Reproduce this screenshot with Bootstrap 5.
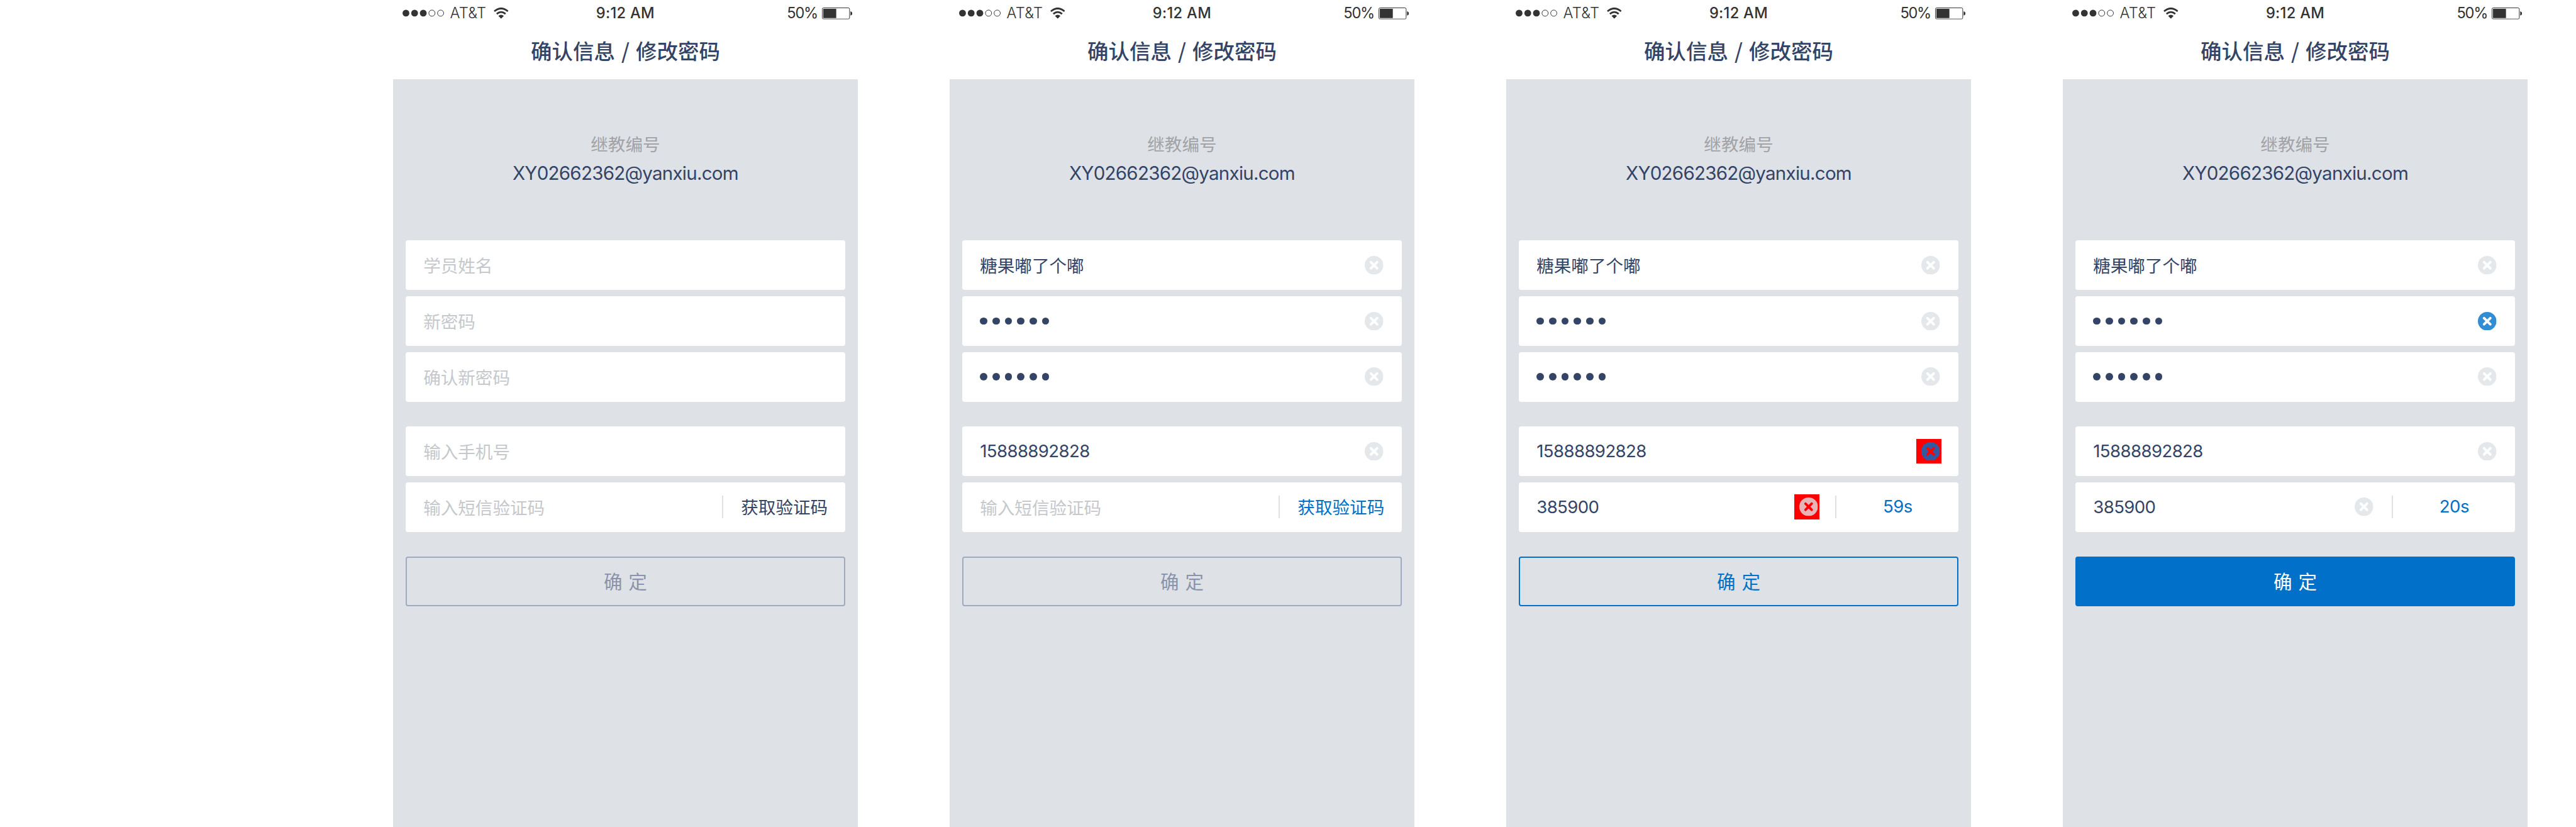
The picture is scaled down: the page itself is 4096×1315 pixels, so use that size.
<!DOCTYPE html>
<html lang="zh-CN">
<head>
<meta charset="utf-8">
<meta name="viewport" content="width=device-width, initial-scale=1">
<title>确认信息 / 修改密码</title>
<link href="https://cdn.jsdelivr.net/npm/bootstrap@5.3.0/dist/css/bootstrap.min.css" rel="stylesheet">
<style>
:root{--ink:#334466;--blue:#0070c9;--panel:#dee2e6}
html,body{overflow:hidden;background:#fff}
body{font-family:"Noto Sans CJK SC",sans-serif;color:var(--ink)}
.board{zoom:.98557;width:4156px;height:1334px;padding-left:634px;gap:148px}
.screen{width:750px;height:1334px;flex:none}
.statusbar{height:43px;padding:0 9px 0 15px;color:#333;font-family:Inter,sans-serif;font-size:24px;line-height:43px}
.statusbar>div{width:300px}
.statusbar svg{display:block;flex:none}
.carrier{font-weight:300;margin-left:10px;letter-spacing:.3px}
.wifi{margin-left:12px}
.clock{font-weight:500;letter-spacing:.3px;width:120px;margin:0 auto 0 0;text-align:center}
.percent{letter-spacing:-1.3px;margin-right:7px}
.titlebar{height:85px;font-size:34px;font-weight:500;line-height:77px;word-spacing:2.5px}
.sheet{background:var(--panel);padding:82px 20px 0}
.caption-line{font-size:28px;line-height:44px;color:#a2a3a6}
.account{font-family:Inter,sans-serif;font-size:30px;line-height:51px;letter-spacing:-.77px;height:134px}
.field{height:80px;background:#fff;border-radius:4px;padding:0 30px 0 29px;font-size:28px;line-height:80px}
.field.with-code{padding-right:0}
.hint{color:#c5c8cc}
.digits{font-family:Inter,sans-serif;letter-spacing:-.6px}
.pw i{width:12px;height:12px;border-radius:50%;background:var(--ink)}
.pw{gap:8px}
.fields{gap:10px}
.clear{width:30px;height:30px;flex:none;color:#fff;fill:var(--panel)}
.clear.on{fill:var(--blue)}
.hit{width:40px;height:40px;background:#f00;flex:none;padding-right:2px}
.hit .clear{color:#f00}
.hit.end{margin-right:-2px}
.code{width:199px;height:36px;line-height:36px;border-left:2.04px solid var(--panel);margin-left:30px;flex:none}
.hit + .code{margin-left:26px}
.code.live{color:var(--blue)}
.submit{--bs-btn-border-radius:4px;--bs-btn-border-width:2.04px;--bs-btn-padding-y:0;height:80px;font-size:30px;line-height:74px;word-spacing:3.3px;margin-top:40px;
--bs-btn-color:#8a93aa;--bs-btn-border-color:#a0aabf}
.submit.ready{--bs-btn-color:var(--blue);--bs-btn-border-color:var(--blue)}
.submit.full{--bs-btn-color:#fff;--bs-btn-bg:var(--blue);--bs-btn-border-color:var(--blue)}
</style>
<script src="https://cdn.jsdelivr.net/npm/bootstrap@5.3.0/dist/js/bootstrap.bundle.min.js"></script>
</head>
<body>
<svg width="0" height="0" class="position-absolute">
  <symbol id="signal" viewBox="0 0 67 12"><g fill="#333"><circle cx="5.5" cy="6" r="5.5"/><circle cx="19.5" cy="6" r="5.5"/><circle cx="33.5" cy="6" r="5.5"/></g><g fill="none" stroke="#333"><circle cx="47.5" cy="6" r="5"/><circle cx="61.5" cy="6" r="5"/></g></symbol>
  <symbol id="wifi" viewBox="0 0 24 18"><g fill="none" stroke="#333"><path stroke-width="2.9" d="M1 6.1Q12-3.2 23 6.1"/><path stroke-width="2.8" d="M4.9 10.3Q12 4.1 19.1 10.3"/></g><path fill="#333" d="M7.6 13.4Q12 9.7 16.4 13.4L12 18Z"/></symbol>
  <symbol id="battery" viewBox="0 0 49 19"><rect x=".5" y=".5" width="44" height="18" rx="2" fill="none" stroke="#333"/><rect x="2" y="2" width="21" height="15" fill="#333"/><path fill="#333" d="M46 6Q49 7 49 9.5T46 13Z"/></symbol>
  <symbol id="clear" viewBox="0 0 30 30"><circle cx="15" cy="15" r="15" opacity=".8"/><path d="M10 10L20 20M20 10L10 20" fill="none" stroke="currentColor" stroke-width="4" stroke-linecap="round"/></symbol>
</svg>
<main class="board d-flex">

  <section class="screen d-flex flex-column">
    <div class="statusbar d-flex align-items-center">
      <div class="d-flex align-items-center"><svg width="67" height="12"><use href="#signal"/></svg><span class="carrier">AT&amp;T</span><svg class="wifi" width="24" height="18"><use href="#wifi"/></svg></div>
      <span class="clock">9:12 AM</span>
      <div class="d-flex align-items-center justify-content-end"><span class="percent">50%</span><svg width="49" height="19"><use href="#battery"/></svg></div>
    </div>
    <header class="titlebar text-center">确认信息 / 修改密码</header>
    <div class="sheet flex-grow-1">
      <div class="caption-line text-center">继教编号</div>
      <div class="account text-center">XY02662362@yanxiu.com</div>
      <div class="fields d-flex flex-column">
        <div class="field hint">学员姓名</div>
        <div class="field hint">新密码</div>
        <div class="field hint">确认新密码</div>
      </div>
      <div class="fields d-flex flex-column" style="margin-top:40px">
        <div class="field hint">输入手机号</div>
        <div class="field with-code d-flex align-items-center justify-content-between"><span class="hint">输入短信验证码</span><span class="code text-center">获取验证码</span></div>
      </div>
      <button class="btn submit w-100">确 定</button>
    </div>
  </section>

  <section class="screen d-flex flex-column">
    <div class="statusbar d-flex align-items-center">
      <div class="d-flex align-items-center"><svg width="67" height="12"><use href="#signal"/></svg><span class="carrier">AT&amp;T</span><svg class="wifi" width="24" height="18"><use href="#wifi"/></svg></div>
      <span class="clock">9:12 AM</span>
      <div class="d-flex align-items-center justify-content-end"><span class="percent">50%</span><svg width="49" height="19"><use href="#battery"/></svg></div>
    </div>
    <header class="titlebar text-center">确认信息 / 修改密码</header>
    <div class="sheet flex-grow-1">
      <div class="caption-line text-center">继教编号</div>
      <div class="account text-center">XY02662362@yanxiu.com</div>
      <div class="fields d-flex flex-column">
        <div class="field d-flex align-items-center justify-content-between"><span>糖果嘟了个嘟</span><svg class="clear"><use href="#clear"/></svg></div>
        <div class="field d-flex align-items-center justify-content-between"><span class="pw d-flex"><i></i><i></i><i></i><i></i><i></i><i></i></span><svg class="clear"><use href="#clear"/></svg></div>
        <div class="field d-flex align-items-center justify-content-between"><span class="pw d-flex"><i></i><i></i><i></i><i></i><i></i><i></i></span><svg class="clear"><use href="#clear"/></svg></div>
      </div>
      <div class="fields d-flex flex-column" style="margin-top:40px">
        <div class="field d-flex align-items-center justify-content-between"><span class="digits">15888892828</span><svg class="clear"><use href="#clear"/></svg></div>
        <div class="field with-code d-flex align-items-center justify-content-between"><span class="hint">输入短信验证码</span><span class="code live text-center">获取验证码</span></div>
      </div>
      <button class="btn submit w-100">确 定</button>
    </div>
  </section>

  <section class="screen d-flex flex-column">
    <div class="statusbar d-flex align-items-center">
      <div class="d-flex align-items-center"><svg width="67" height="12"><use href="#signal"/></svg><span class="carrier">AT&amp;T</span><svg class="wifi" width="24" height="18"><use href="#wifi"/></svg></div>
      <span class="clock">9:12 AM</span>
      <div class="d-flex align-items-center justify-content-end"><span class="percent">50%</span><svg width="49" height="19"><use href="#battery"/></svg></div>
    </div>
    <header class="titlebar text-center">确认信息 / 修改密码</header>
    <div class="sheet flex-grow-1">
      <div class="caption-line text-center">继教编号</div>
      <div class="account text-center">XY02662362@yanxiu.com</div>
      <div class="fields d-flex flex-column">
        <div class="field d-flex align-items-center justify-content-between"><span>糖果嘟了个嘟</span><svg class="clear"><use href="#clear"/></svg></div>
        <div class="field d-flex align-items-center justify-content-between"><span class="pw d-flex"><i></i><i></i><i></i><i></i><i></i><i></i></span><svg class="clear"><use href="#clear"/></svg></div>
        <div class="field d-flex align-items-center justify-content-between"><span class="pw d-flex"><i></i><i></i><i></i><i></i><i></i><i></i></span><svg class="clear"><use href="#clear"/></svg></div>
      </div>
      <div class="fields d-flex flex-column" style="margin-top:40px">
        <div class="field d-flex align-items-center justify-content-between"><span class="digits">15888892828</span><span class="hit end d-flex align-items-center justify-content-end"><svg class="clear on"><use href="#clear"/></svg></span></div>
        <div class="field with-code d-flex align-items-center"><span class="digits me-auto">385900</span><span class="hit d-flex align-items-center justify-content-end"><svg class="clear"><use href="#clear"/></svg></span><span class="code live digits text-center">59s</span></div>
      </div>
      <button class="btn submit ready w-100">确 定</button>
    </div>
  </section>

  <section class="screen d-flex flex-column">
    <div class="statusbar d-flex align-items-center">
      <div class="d-flex align-items-center"><svg width="67" height="12"><use href="#signal"/></svg><span class="carrier">AT&amp;T</span><svg class="wifi" width="24" height="18"><use href="#wifi"/></svg></div>
      <span class="clock">9:12 AM</span>
      <div class="d-flex align-items-center justify-content-end"><span class="percent">50%</span><svg width="49" height="19"><use href="#battery"/></svg></div>
    </div>
    <header class="titlebar text-center">确认信息 / 修改密码</header>
    <div class="sheet flex-grow-1">
      <div class="caption-line text-center">继教编号</div>
      <div class="account text-center">XY02662362@yanxiu.com</div>
      <div class="fields d-flex flex-column">
        <div class="field d-flex align-items-center justify-content-between"><span>糖果嘟了个嘟</span><svg class="clear"><use href="#clear"/></svg></div>
        <div class="field d-flex align-items-center justify-content-between"><span class="pw d-flex"><i></i><i></i><i></i><i></i><i></i><i></i></span><svg class="clear on"><use href="#clear"/></svg></div>
        <div class="field d-flex align-items-center justify-content-between"><span class="pw d-flex"><i></i><i></i><i></i><i></i><i></i><i></i></span><svg class="clear"><use href="#clear"/></svg></div>
      </div>
      <div class="fields d-flex flex-column" style="margin-top:40px">
        <div class="field d-flex align-items-center justify-content-between"><span class="digits">15888892828</span><svg class="clear"><use href="#clear"/></svg></div>
        <div class="field with-code d-flex align-items-center"><span class="digits me-auto">385900</span><svg class="clear"><use href="#clear"/></svg><span class="code live digits text-center">20s</span></div>
      </div>
      <button class="btn submit full w-100">确 定</button>
    </div>
  </section>

</main>
</body>
</html>
